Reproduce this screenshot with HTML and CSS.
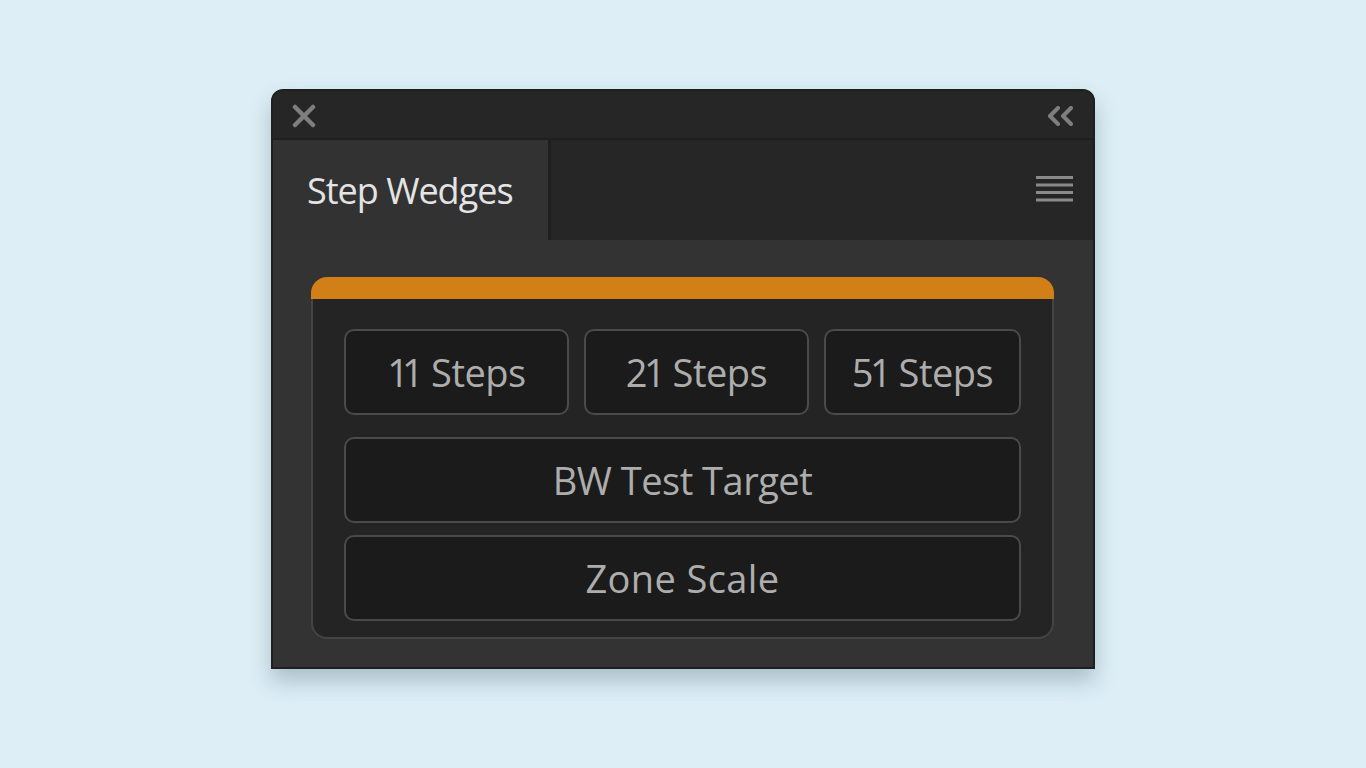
FILE: index.html
```html
<!DOCTYPE html>
<html lang="en">
<head>
<meta charset="utf-8">
<title>Step Wedges</title>
<link rel="stylesheet" href="styles.css">
</head>
<body>
<div class="panel">
  <div class="titlebar">
    <svg class="icon-close" width="24" height="24" viewBox="0 0 24 24">
      <path d="M3 3 L21 21 M21 3 L3 21" stroke="#7e7e7e" stroke-width="4.5" stroke-linecap="round" fill="none"/>
    </svg>
    <svg class="icon-collapse" width="28" height="20" viewBox="0 0 28 20">
      <path d="M12 2 L4 10 L12 18 M25 2 L17 10 L25 18" stroke="#7e7e7e" stroke-width="4" stroke-linecap="round" stroke-linejoin="round" fill="none"/>
    </svg>
  </div>
  <div class="tabrow">
    <div class="tab">Step Wedges</div>
    <div class="tabfill">
      <svg class="icon-menu" width="37" height="26" viewBox="0 0 37 26">
        <rect x="0" y="0" width="37" height="3" fill="#8a8a8a"/>
        <rect x="0" y="7.5" width="37" height="3" fill="#8a8a8a"/>
        <rect x="0" y="15" width="37" height="3" fill="#8a8a8a"/>
        <rect x="0" y="22.5" width="37" height="3" fill="#8a8a8a"/>
      </svg>
    </div>
  </div>
  <div class="body">
    <div class="group">
      <div class="group-head"></div>
      <div class="group-content">
        <div class="row-steps">
          <button class="btn"><span class="num num-ones">11</span> Steps</button>
          <button class="btn"><span class="num">21</span> Steps</button>
          <button class="btn"><span class="num">51</span> Steps</button>
        </div>
        <button class="btn btn-wide btn-target">BW Test Target</button>
        <button class="btn btn-wide btn-zone">Zone Scale</button>
      </div>
    </div>
  </div>
</div>
</body>
</html>
```

FILE: styles.css
```css
* { box-sizing: border-box; }
html, body { margin: 0; padding: 0; }
body {
  background: #ddeef6;
  width: 1366px;
  height: 768px;
  overflow: hidden;
  font-family: "Open Sans", "Noto Sans", sans-serif;
}
.panel {
  width: 824px;
  margin: 89px auto 0;
  border: 2px solid #1f1f1f;
  border-radius: 12px 12px 0 0;
  background: #333333;
  overflow: hidden;
  box-shadow: 0 12px 22px rgba(40, 70, 90, 0.28);
}
.titlebar {
  height: 49px;
  background: #262626;
  border-bottom: 2px solid #1f1f1f;
  display: flex;
  align-items: center;
  justify-content: space-between;
  padding: 0 19px 0 19px;
}
.icon-close { display: block; margin-top: 2px; }
.icon-collapse { display: block; margin-top: 2px; }
.tabrow {
  height: 100px;
  display: flex;
  background: #262626;
}
.tab {
  width: 275px;
  background: #323232;
  color: #e4e4e4;
  font-size: 36px;
  display: flex;
  align-items: center;
  padding-left: 34px;
  letter-spacing: -1px;
}
.tabfill {
  flex: 1;
  border-left: 3px solid #1f1f1f;
  display: flex;
  align-items: center;
  justify-content: flex-end;
  padding-right: 20px;
}
.icon-menu { display: block; margin-top: -2px; }
.body {
  height: 427px;
  background: #333333;
  padding: 37px 39px 0 38px;
}
.group {
  width: 743px;
}
.group-head {
  height: 22px;
  background: #d17f16;
  border-radius: 16px 16px 0 0;
}
.group-content {
  background: #242424;
  border: 2px solid #444444;
  border-top: none;
  border-radius: 0 0 16px 16px;
  padding: 30px 31px 16px 31px;
  display: flex;
  flex-direction: column;
}
.row-steps {
  display: grid;
  grid-template-columns: 225px 225px 1fr;
  column-gap: 15px;
}
.btn {
  height: 86px;
  background: #1b1b1b;
  border: 2px solid #4a4a4a;
  border-radius: 10px;
  color: #adadad;
  font-family: "Open Sans", "Noto Sans", sans-serif;
  font-size: 38px;
  letter-spacing: -0.5px;
  padding: 0;
  display: flex;
  align-items: center;
  justify-content: center;
  white-space: pre;
}
.num { letter-spacing: -3.5px; margin-right: 1px; }
.num-ones { letter-spacing: -7px; margin-right: 5px; }
.btn-target { margin-top: 22px; }
.btn-zone { margin-top: 12px; letter-spacing: 0.4px; }
```
